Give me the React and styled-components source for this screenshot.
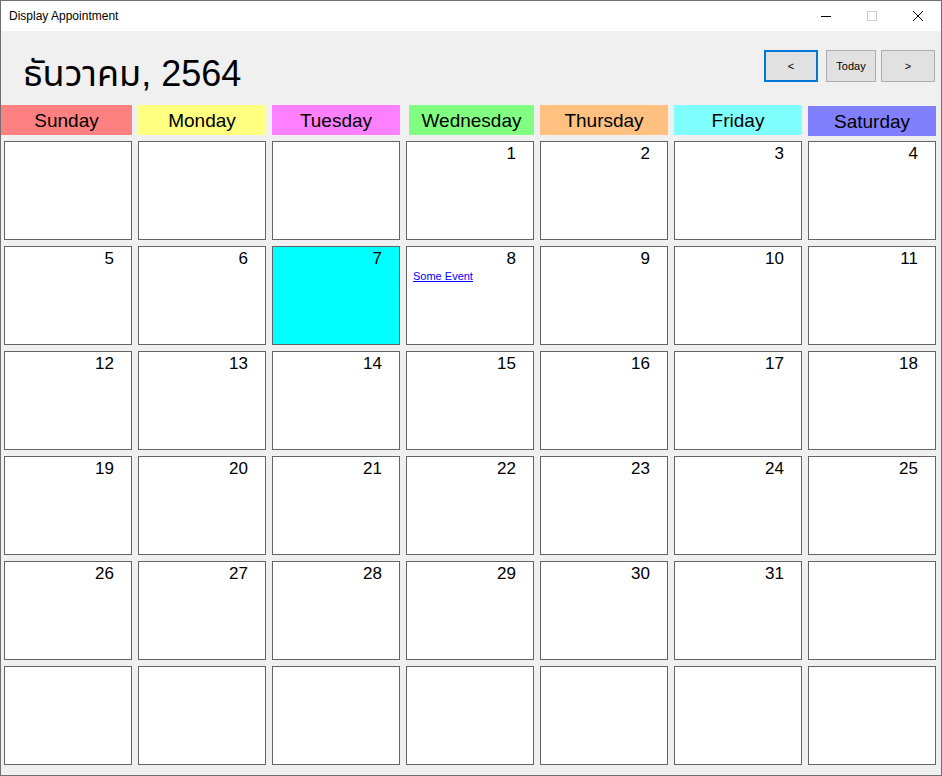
import React from "react";
import styled, { createGlobalStyle } from "styled-components";

const Global = createGlobalStyle`
  html, body { margin: 0; padding: 0; background: #ffffff; }
  body { font-family: "Liberation Sans", Arial, sans-serif; }
  * { box-sizing: border-box; }
`;

const Window = styled.div`
  width: 942px;
  height: 776px;
  border: 1px solid #6f6f6f;
  display: flex;
  flex-direction: column;
  background: #f0f0f0;
  overflow: hidden;
`;

const TitleBar = styled.div`
  height: 30px;
  flex: none;
  background: #ffffff;
  display: flex;
  align-items: center;
`;

const TitleText = styled.div`
  flex: 1;
  padding-left: 8px;
  font-family: "Liberation Sans", Arial, sans-serif;
  font-size: 12px;
  color: #000000;
`;

const WinButton = styled.div`
  width: 46px;
  height: 30px;
  display: flex;
  align-items: center;
  justify-content: center;
`;

const Client = styled.div`
  flex: 1;
  display: flex;
  flex-direction: column;
  background: #f0f0f0;
  padding: 0 6px 0 3px;
`;

const Header = styled.div`
  height: 74px;
  display: flex;
  align-items: flex-start;
  justify-content: space-between;
`;

const MonthTitle = styled.div`
  margin-top: 25px;
  margin-left: 19px;
  font-family: "Liberation Sans", Arial, "Noto Sans Thai", "Tahoma", "DejaVu Sans", sans-serif;
  font-size: 36px;
  line-height: 36px;
  color: #000000;
`;

const NavGroup = styled.div`
  margin-top: 19px;
  display: flex;
`;

const NavButton = styled.button`
  width: ${(p) => p.$w}px;
  height: 32px;
  margin-left: ${(p) => p.$ml}px;
  padding: 0;
  background: #e1e1e1;
  border: ${(p) => (p.$focus ? "2px solid #0078d7" : "1px solid #adadad")};
  font-family: "Liberation Sans", Arial, sans-serif;
  font-size: 11px;
  color: #000000;
  display: flex;
  align-items: center;
  justify-content: center;
`;

const Grid = styled.div`
  display: grid;
  grid-template-columns: repeat(7, 128px);
  column-gap: 6px;
`;

const DayHeaders = styled(Grid)`
  height: 36px;
  align-items: start;
`;

const DayHeader = styled.div`
  height: 30px;
  line-height: 30px;
  padding-top: 1px;
  margin-left: ${(p) => p.$ml || 0}px;
  margin-top: ${(p) => p.$mt || 0}px;
  background: ${(p) => p.$bg};
  text-align: center;
  font-family: "Liberation Sans", Arial, sans-serif;
  font-size: 19px;
  color: #000000;
`;

const Cells = styled(Grid)`
  grid-auto-rows: 99px;
  row-gap: 6px;
`;

const Cell = styled.div`
  border: 1px solid #646464;
  background: ${(p) => (p.$today ? "#00ffff" : "#ffffff")};
  display: flex;
  flex-direction: column;
`;

const DayNum = styled.div`
  padding: 2px 17px 0 0;
  text-align: right;
  font-family: "Liberation Sans", Arial, sans-serif;
  font-size: 17px;
  line-height: 19px;
  height: 21px;
  color: #000000;
`;

const EventLink = styled.a`
  margin: 2px 0 0 6px;
  font-family: "Liberation Sans", Arial, sans-serif;
  font-size: 11px;
  line-height: 13px;
  color: #0000ff;
  text-decoration: underline;
  align-self: flex-start;
`;

const days = [
  { name: "Sunday", bg: "#ff8080", ml: -3 },
  { name: "Monday", bg: "#ffff80" },
  { name: "Tuesday", bg: "#ff80ff" },
  { name: "Wednesday", bg: "#80ff80", ml: 3 },
  { name: "Thursday", bg: "#ffc080" },
  { name: "Friday", bg: "#80ffff" },
  { name: "Saturday", bg: "#8080ff", mt: 1 },
];

const events = { 8: "Some Event" };
const startOffset = 3;
const daysInMonth = 31;
const today = 7;

export default function App() {
  const cells = Array.from({ length: 42 }, (_, i) => {
    const d = i - startOffset + 1;
    return d >= 1 && d <= daysInMonth ? d : null;
  });
  return (
    <>
      <Global />
      <Window>
        <TitleBar>
          <TitleText>Display Appointment</TitleText>
          <WinButton>
            <svg width="10" height="10" viewBox="0 0 10 10">
              <line x1="0" y1="5.5" x2="10" y2="5.5" stroke="#000" strokeWidth="1" />
            </svg>
          </WinButton>
          <WinButton>
            <svg width="10" height="10" viewBox="0 0 10 10">
              <rect x="0.5" y="0.5" width="9" height="9" fill="none" stroke="#cccccc" strokeWidth="1" />
            </svg>
          </WinButton>
          <WinButton>
            <svg width="10" height="10" viewBox="0 0 10 10">
              <path d="M0 0 L10 10 M10 0 L0 10" stroke="#000" strokeWidth="1" />
            </svg>
          </WinButton>
        </TitleBar>
        <Client>
          <Header>
            <MonthTitle>ธันวาคม, 2564</MonthTitle>
            <NavGroup>
              <NavButton $w={54} $ml={0} $focus>&lt;</NavButton>
              <NavButton $w={50} $ml={8}>Today</NavButton>
              <NavButton $w={54} $ml={5}>&gt;</NavButton>
            </NavGroup>
          </Header>
          <DayHeaders>
            {days.map((d) => (
              <DayHeader key={d.name} $bg={d.bg} $ml={d.ml} $mt={d.mt}>
                {d.name}
              </DayHeader>
            ))}
          </DayHeaders>
          <Cells>
            {cells.map((d, i) => (
              <Cell key={i} $today={d === today}>
                <DayNum>{d ?? ""}</DayNum>
                {d && events[d] && <EventLink href="#">{events[d]}</EventLink>}
              </Cell>
            ))}
          </Cells>
        </Client>
      </Window>
    </>
  );
}
